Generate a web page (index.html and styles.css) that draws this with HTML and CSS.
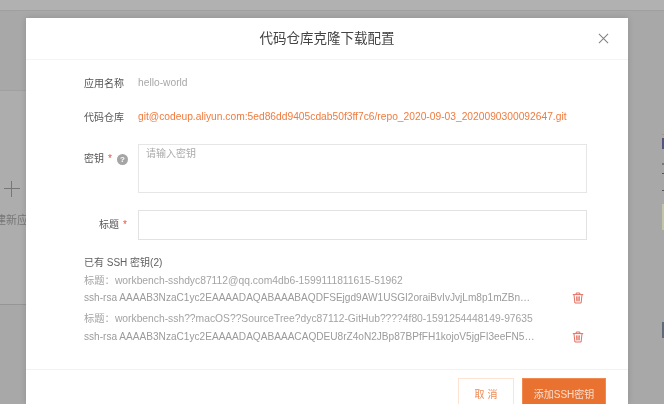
FILE: index.html
```html
<!DOCTYPE html>
<html lang="zh">
<head>
<meta charset="utf-8">
<title>代码仓库克隆下载配置</title>
<link rel="stylesheet" href="styles.css">
</head>
<body>
<div class="backdrop">
  <div class="topband"></div>
  <div class="bgcard">
    <span class="plus"></span>
    <span class="bgtext">建新应用</span>
  </div>
  <div class="sidebits"><i class="b1"></i><i class="b2"></i><i class="b3"></i><i class="b4"></i><i class="b5"></i><i class="b6"></i><i class="b7"></i></div>
</div>
<div class="modal">
  <header class="head">
    <h1>代码仓库克隆下载配置</h1>
    <svg class="close" viewBox="0 0 12 12"><path d="M1 1l10 10M11 1L1 11"/></svg>
  </header>
  <div class="body">
    <div class="row r-name"><label>应用名称</label><span class="val">hello-world</span></div>
    <div class="row r-repo"><label>代码仓库</label><span class="link">git@codeup.aliyun.com:5ed86dd9405cdab50f3ff7c6/repo_2020-09-03_2020090300092647.git</span></div>
    <div class="row r-key"><label>密钥<em>*</em><b class="q">?</b></label><div class="ta">请输入密钥</div></div>
    <div class="row r-title"><label class="right">标题<em>*</em></label><div class="inp"></div></div>
    <div class="keys">
      <h2>已有 SSH 密钥(2)</h2>
      <div class="key k1">
        <div class="ktext"><p>标题：workbench-sshdyc87112@qq.com4db6-1599111811615-51962</p><p class="l2">ssh-rsa AAAAB3NzaC1yc2EAAAADAQABAAABAQDFSEjgd9AW1USGI2oraiBvIvJvjLm8p1mZBn…</p></div>
        <svg class="trash" viewBox="0 0 12 12"><path d="M.8 2.6h10.4M4.2 2.4V1h3.6v1.4M2 2.8l.9 8.2h6.2l.9-8.2M4.6 4.4l.2 5M7.4 4.4l-.2 5M6 4.4v5"/></svg>
      </div>
      <div class="key k2">
        <div class="ktext"><p>标题：workbench-ssh??macOS??SourceTree?dyc87112-GitHub????4f80-1591254448149-97635</p><p class="l2">ssh-rsa AAAAB3NzaC1yc2EAAAADAQABAAACAQDEU8rZ4oN2JBp87BPfFH1kojoV5jgFI3eeFN5…</p></div>
        <svg class="trash" viewBox="0 0 12 12"><path d="M.8 2.6h10.4M4.2 2.4V1h3.6v1.4M2 2.8l.9 8.2h6.2l.9-8.2M4.6 4.4l.2 5M7.4 4.4l-.2 5M6 4.4v5"/></svg>
      </div>
    </div>
  </div>
  <footer class="foot">
    <button class="btn ghost">取 消</button>
    <button class="btn solid">添加SSH密钥</button>
  </footer>
</div>
</body>
</html>
```
FILE: styles.css
```css
* { box-sizing: border-box; }
html, body { margin: 0; height: 100%; overflow: hidden; }
html { background: #a8a8a8; }
body {
  width: 664px; height: 404px; position: relative;
  background: #a8a8a8;
  font-family: "Liberation Sans", "Noto Sans CJK SC", sans-serif;
  filter: blur(.35px);
}
.backdrop { position: absolute; inset: 0; }
.topband { height: 11px; background: #b1b1b1; border-bottom: 1px solid #a0a0a0; }
.bgcard {
  position: absolute; left: 0; top: 90px; width: 30px; height: 215px;
  background: #adadad; border-top: 1px solid #a0a0a0; border-bottom: 1px solid #969696;
}
.plus { position: absolute; left: 4px; top: 90px; width: 16px; height: 16px;
  background: linear-gradient(#777,#777) center/16px 1.4px no-repeat, linear-gradient(#777,#777) center/1.4px 16px no-repeat; }
.bgtext { position: absolute; left: -5px; top: 120px; font-size: 11px; color: #777; white-space: nowrap; }
.sidebits i { position: absolute; left: 662px; width: 2px; }
.b1 { top: 134px; height: 1px; background: #b09080; }
.b2 { top: 138px; height: 11px; background: #55557c; }
.b3 { top: 163px; height: 2px; background: #777; }
.b4 { top: 173px; height: 1px; background: #555; }
.b5 { top: 190px; height: 1px; background: #555; }
.b6 { top: 204px; height: 26px; background: #c4c4a8; }
.b7 { top: 322px; height: 16px; background: #606a78; }
.modal {
  position: absolute; left: 26px; top: 18px; width: 602px; height: 386px;
  background: #fff; box-shadow: 0 0 6px rgba(0,0,0,.15);
  display: flex; flex-direction: column; color: #555; overflow: hidden;
}
.head { height: 42px; flex: none; border-bottom: 1px solid #f4f4f4; display: flex; align-items: center; justify-content: center; position: relative; }
.head h1 { margin: 0 0 3px; font-size: 13.5px; font-weight: 400; color: #444; }
.close { position: absolute; left: 572px; top: 15px; width: 11px; height: 11px; fill: none; stroke: #808080; stroke-width: 1.1; }
.body { height: 309px; flex: none; position: relative; }
.row { display: flex; align-items: flex-start; }
.row label { width: 112px; flex: none; padding-left: 58px; font-size: 10px; color: #555; white-space: nowrap; line-height: 14px; }
.row label.right { padding-left: 73px; }
.row em { color: #e8533f; font-style: normal; margin-left: 4px; font-size: 10px; }
.r-name { padding-top: 16px; }
.r-name label { padding-top: 1px; }
.val { font-size: 10.25px; color: #a8a8a8; line-height: 14px; }
.r-repo { padding-top: 19px; }
.r-repo label { padding-top: 1px; }
.link { font-size: 10.26px; color: #ef7b3f; line-height: 14px; white-space: nowrap; }
.r-key { padding-top: 19px; }
.r-key label { padding-top: 8px; display: flex; align-items: flex-start; }
.q { width: 11px; height: 11px; border-radius: 50%; background: #a5a5a5; color: #fff; font-size: 8px; line-height: 11px; text-align: center; margin: 2px 0 0 5px; font-weight: 700; }
.ta { width: 449px; height: 49px; border: 1px solid #e6e6e6; font-size: 10px; color: #aaa; padding: 2px 7px; line-height: 14px; }
.r-title { padding-top: 17px; }
.r-title label { padding-top: 8px; }
.inp { width: 449px; height: 30px; border: 1px solid #e2e2e2; }
.keys { padding: 16px 0 0 58px; }
.keys h2 { margin: 0; font-size: 10px; font-weight: 400; color: #606060; line-height: 14px; }
.key { display: flex; position: relative; width: 490px; }
.key p { margin: 0; font-size: 10.3px; color: #a3a3a3; line-height: 14px; white-space: nowrap; }
.key p.l2 { color: #9b9b9b; font-size: 10.1px; }
.k1 { margin-top: 4px; }
.k1 p.l2 { margin-top: 3px; }
.k2 { margin-top: 7px; }
.k2 p.l2 { margin-top: 4px; }
.trash { position: absolute; left: 488px; width: 12px; height: 12px; fill: none; stroke: #e06050; stroke-width: .9; }
.k1 .trash { top: 18px; }
.k2 .trash { top: 19px; }
.foot { height: 35px; flex: none; border-top: 1px solid #f2f2f2; display: flex; justify-content: flex-end; align-items: flex-start; padding: 8px 22px 0 0; gap: 8px; }
.btn { font-family: inherit; font-size: 10px; height: 30px; margin: 0; padding: 0; border-radius: 0; flex: none; }
.ghost { width: 56px; background: #fff; border: 1px solid #fde3d0; color: #ee8a55; }
.solid { width: 84px; background: #ea7230; border: 1px solid #f08a50; color: #f8ded0; }
```
